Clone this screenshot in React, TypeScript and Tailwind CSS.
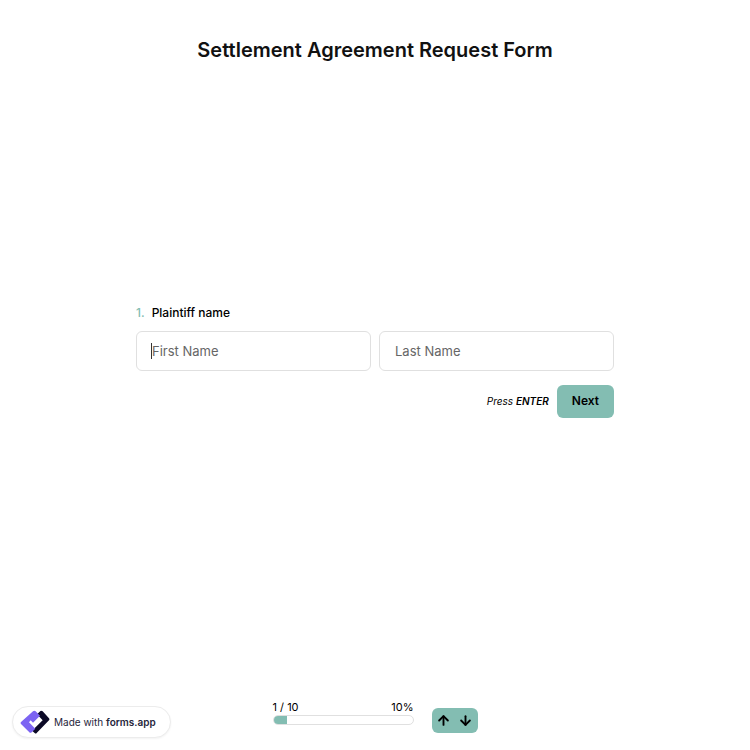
import { ArrowDown, ArrowUp } from "lucide-react";

function Logo() {
  return (
    <svg width="30" height="24" viewBox="0 0 90 72" aria-hidden="true">
      <path
        d="M59 5Q63 0 68 4L87 25Q90 28 87 31L50 69Q47 72 44 69L36 62L68 31L51 13Z"
        fill="#0b0926"
      />
      <path
        d="M3 36L39 4Q43 1 47 4L60 17L39 38L32 31L27 37L46 56L35 67Q31 70 28 67L3 42Q0 39 3 36Z"
        fill="#7c64f2"
      />
    </svg>
  );
}

export default function App() {
  const step = 1;
  const total = 10;
  const percent = (step / total) * 100;

  return (
    <div className="flex min-h-screen flex-col bg-white font-['Inter',sans-serif] text-black">

      <header className="px-6 pt-9 text-center">
        <h1 className="text-[20px] leading-7 font-semibold text-[#111111]">
          Settlement Agreement Request Form
        </h1>
      </header>

      <main className="flex flex-1 items-center justify-center px-6 pb-11">
        <form
          className="w-full max-w-[478px]"
          onSubmit={(e) => e.preventDefault()}
        >
          <fieldset>
            <legend className="flex gap-[7px] text-[12px] leading-5 font-medium">
              <span className="text-[#83bdb2]">1.</span>
              Plaintiff name
            </legend>

            <div className="mt-2 grid grid-cols-2 gap-2">
              <div className="relative">
                <input
                  type="text"
                  aria-label="First Name"
                  placeholder="First Name"
                  autoFocus
                  className="peer h-10 w-full rounded-md border border-[#e0e0e0] px-[15px] text-[13px] caret-transparent outline-none placeholder:text-[#666666]"
                />
                <span className="pointer-events-none absolute top-3 left-[15px] hidden h-4 w-px bg-[#333333] peer-placeholder-shown:block" />
              </div>
              <input
                type="text"
                aria-label="Last Name"
                placeholder="Last Name"
                className="h-10 w-full rounded-md border border-[#e0e0e0] px-[15px] text-[13px] outline-none placeholder:text-[#666666]"
              />
            </div>
          </fieldset>

          <div className="mt-3.5 flex items-center justify-end gap-2">
            <span className="text-[10px] italic">
              Press <b className="font-semibold">ENTER</b>
            </span>
            <button
              type="submit"
              className="h-[33px] rounded-md bg-[#83bdb2] px-[15px] text-[12px] font-semibold"
            >
              Next
            </button>
          </div>
        </form>
      </main>

      <footer className="grid grid-cols-[1fr_auto_1fr] items-end px-3 pb-3">
        <a
          href="#"
          className="flex h-8 items-center gap-1 justify-self-start rounded-full border border-[#ececec] bg-white pr-3.5 pl-[7px] text-[10px] text-[#25253a] shadow-xs"
        >
          <Logo />
          <span>
            Made with <b className="font-semibold">forms.app</b>
          </span>
        </a>

        <div className="flex items-end gap-[18px] pb-[5px]">
          <div className="w-[141px] pb-2">
            <div className="flex justify-between text-[11px] leading-[15px]">
              <span>{step} / {total}</span>
              <span>{percent}%</span>
            </div>
            <div className="h-2.5 overflow-hidden rounded-full border border-[#e0e0e0]">
              <div
                className="h-full bg-[#83bdb2]"
                style={{ width: `${percent}%` }}
              />
            </div>
          </div>

          <div className="flex h-[25px] rounded-md bg-[#83bdb2] px-px">
            <button
              type="button"
              aria-label="Previous question"
              className="flex w-[22px] items-center justify-center"
            >
              <ArrowUp size={15} strokeWidth={3} />
            </button>
            <button
              type="button"
              aria-label="Next question"
              className="flex w-[22px] items-center justify-center"
            >
              <ArrowDown size={15} strokeWidth={3} />
            </button>
          </div>
        </div>
      </footer>
    </div>
  );
}
